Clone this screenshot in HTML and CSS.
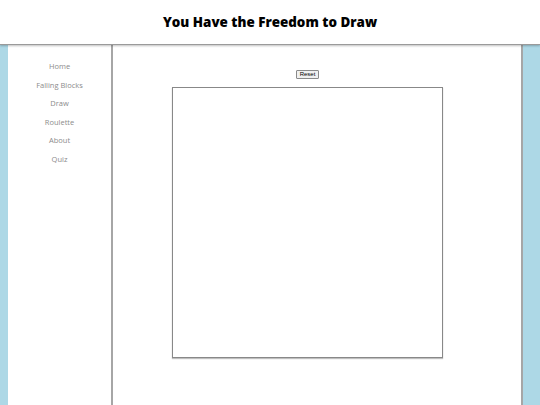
FILE: index.html
```html
<!DOCTYPE html>
<html>
<head>
<meta charset="utf-8">
<link rel="stylesheet" href="styles.css">
</head>
<body>
<header class="top">
  <h1 class="title">You Have the Freedom to Draw</h1>
</header>
<div class="layout">
  <nav class="side">
    <a class="link" href="#">Home</a>
    <a class="link" href="#">Falling Blocks</a>
    <a class="link" href="#">Draw</a>
    <a class="link" href="#">Roulette</a>
    <a class="link" href="#">About</a>
    <a class="link" href="#">Quiz</a>
  </nav>
  <main class="main">
    <button class="reset">Reset</button>
    <div class="canvas"></div>
  </main>
</div>
</body>
</html>
```
FILE: styles.css
```css
html, body {
  margin: 0;
  padding: 0;
  height: 100%;
}
body {
  background: #add8e6;
  font-family: "Open Sans", "Liberation Sans", sans-serif;
  overflow: hidden;
}
.top {
  position: relative;
  z-index: 2;
  height: 44px;
  background: #fff;
  border-bottom: 1px solid #9a9a9a;
  box-shadow: 0 1px 2px rgba(0,0,0,0.25);
  display: flex;
  align-items: center;
  justify-content: center;
}
.title {
  margin: 0;
  font-size: 13.4px;
  font-weight: 800;
  color: #000;
}
.layout {
  display: flex;
  margin: 0 17px 0 8px;
  height: calc(100% - 45px);
}
.side {
  width: 103px;
  background: #fff;
  border-right: 2px solid #a6a6a6;
  display: flex;
  flex-direction: column;
  align-items: center;
  padding-top: 12px;
}
.link {
  font-size: 7.5px;
  font-weight: 400;
  color: #8c8c8c;
  text-decoration: none;
  line-height: 18.5px;
}
.main {
  flex: 1;
  background: #fff;
  border-right: 2px solid #a6a6a6;
  display: flex;
  flex-direction: column;
  align-items: center;
  padding: 25px 19px 0 0;
}
.reset {
  font-family: "Liberation Sans", sans-serif;
  font-size: 6px;
  padding: 0 3px;
  height: 9px;
  line-height: 7px;
  border: 1px solid #8a8a8a;
  border-radius: 1px;
  background: #f0f0f0;
  color: #000;
}
.canvas {
  margin-top: 8px;
  width: 269px;
  height: 269px;
  border: 1px solid #888;
  box-shadow: 0 1px 1px rgba(0,0,0,0.25);
  background: #fff;
}
```
